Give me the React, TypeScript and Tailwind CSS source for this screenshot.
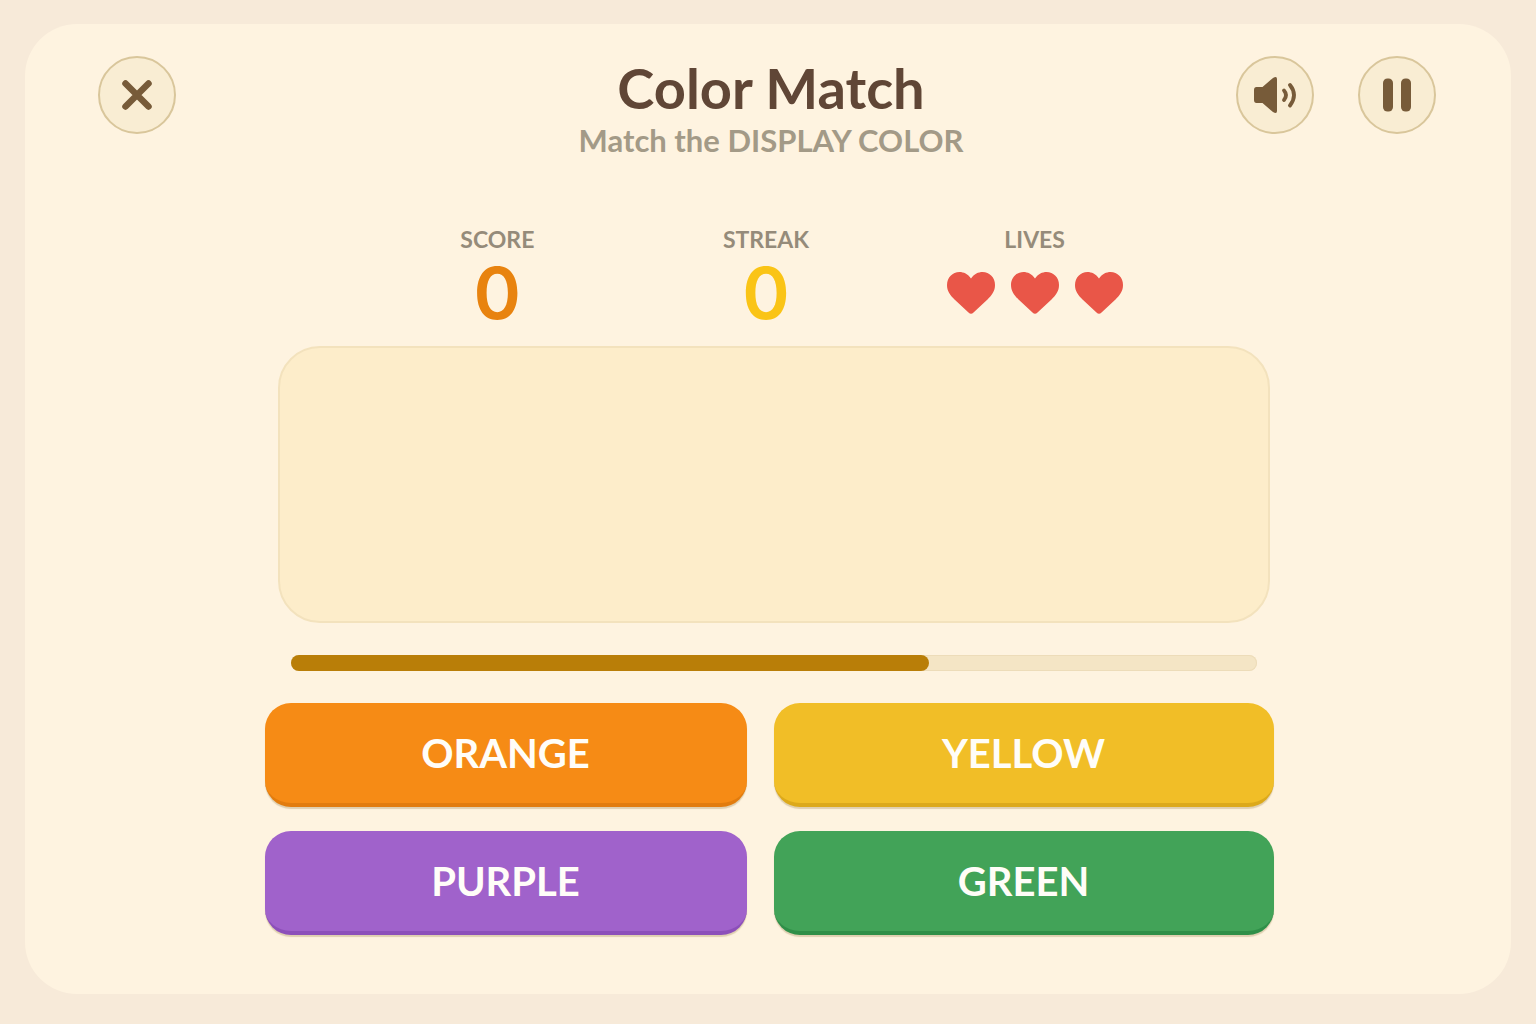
import React, { useState } from 'react';

const colorOptions = [
  { name: 'ORANGE', classes: 'bg-[#f68b15] border-[#e27c0e]' },
  { name: 'YELLOW', classes: 'bg-[#f1be27] border-[#dca91b]' },
  { name: 'PURPLE', classes: 'bg-[#a062cb] border-[#8c4fba]' },
  { name: 'GREEN', classes: 'bg-[#42a358] border-[#2f8f48]' },
];

const CloseIcon = () => (
  <svg className="h-10 w-10" viewBox="0 0 40 40" fill="none" stroke="#775b39" strokeWidth="6.500" strokeLinecap="round" aria-hidden="true">
    <path d="M8.500 8.500 L31.500 31.500 M31.500 8.500 L8.500 31.500" />
  </svg>
);

const SpeakerIcon = () => (
  <svg className="h-11 w-11" viewBox="0 0 44 44" fill="none" aria-hidden="true">
    <path
      d="M3.500 14 H9.500 L20 5 Q24 2.500 24 6 V38 Q24 41.500 20 39 L9.500 30 H3.500 Q1 30 1 27 V17 Q1 14 3.500 14 Z"
      fill="#775b39"
    />
    <path d="M31 17.500 Q35 22 31 27" stroke="#775b39" strokeWidth="3.800" strokeLinecap="round" />
    <path d="M37 12 Q45 22 37 32.500" stroke="#775b39" strokeWidth="3.800" strokeLinecap="round" />
  </svg>
);

const PauseIcon = () => (
  <svg className="h-10 w-10" viewBox="0 0 40 40" fill="#775b39" aria-hidden="true">
    <rect x="6" y="3.500" width="10" height="33" rx="4.500" />
    <rect x="24" y="3.500" width="10" height="33" rx="4.500" />
  </svg>
);

const Heart = () => (
  <svg className="h-[42px] w-12" viewBox="0 0 48 42" fill="#e95648" aria-hidden="true">
    <path d="M24 6.500 C21 2 16.500 0 12.500 0 C5.500 0 0 5.500 0 13 C0 19 3 23 7.500 27.500 L21.500 40.500 Q24 43 26.500 40.500 L40.500 27.500 C45 23 48 19 48 13 C48 5.500 42.500 0 35.500 0 C31.500 0 27 2 24 6.500 Z" />
  </svg>
);

const RoundButton = ({ label, onClick, children }: { label: string; onClick?: () => void; children: React.ReactNode }) => (
  <button
    type="button"
    aria-label={label}
    onClick={onClick}
    className="flex h-[78px] w-[78px] shrink-0 items-center justify-center rounded-full border-2 border-[#d9c69b] bg-[#f9edd3]"
  >
    {children}
  </button>
);

const Stat = ({ label, children }: { label: string; children: React.ReactNode }) => (
  <div className="flex flex-col items-center">
    <span className="text-[23px] leading-8 font-bold text-[#958b7a]">{label}</span>
    <div className="flex h-[76px] items-center gap-4">{children}</div>
  </div>
);

const App = () => {
  const [score, setScore] = useState(0);
  const [streak, setStreak] = useState(0);
  const lives = 3;
  const timeLeft = 66;

  const restart = () => {
    setScore(0);
    setStreak(0);
  };

  return (
    <div className="flex min-h-screen bg-[#f7ead9] px-[25px] pt-6 pb-[30px] font-['Lato',sans-serif]">
      <main className="flex-1 rounded-[52px] bg-[#fef3e0] pt-8 pb-14">
        <header className="grid grid-cols-[1fr_auto_1fr] items-start pr-[75px] pl-[73px]">
          <RoundButton label="Close" onClick={restart}>
            <CloseIcon />
          </RoundButton>
          <div className="pl-2 text-center">
            <h1 className="text-[56px] leading-[64px] font-bold text-[#604636]">Color Match</h1>
            <p className="text-[31px] leading-10 font-bold text-[#a39a87]">Match the DISPLAY COLOR</p>
          </div>
          <div className="flex justify-end gap-11">
            <RoundButton label="Sound">
              <SpeakerIcon />
            </RoundButton>
            <RoundButton label="Pause">
              <PauseIcon />
            </RoundButton>
          </div>
        </header>

        <section className="pt-[63px] pr-1">
          <div className="mx-auto grid max-w-[806px] grid-cols-3">
            <Stat label="SCORE">
              <span className="font-['Inter'] text-7xl font-semibold text-[#e8830f]">{score}</span>
            </Stat>
            <Stat label="STREAK">
              <span className="font-['Inter'] text-7xl font-semibold text-[#fac416]">{streak}</span>
            </Stat>
            <Stat label="LIVES">
              {Array.from({ length: lives }, (_, i) => (
                <Heart key={i} />
              ))}
            </Stat>
          </div>
        </section>

        <div className="pl-3">
          <div className="mx-auto mt-[15px] h-[277px] max-w-[992px] rounded-[42px] border-2 border-[#f3e2bd] bg-[#fdedca]" />
          <div
            role="progressbar"
            aria-label="Time left"
            aria-valuenow={timeLeft}
            className="mx-auto mt-8 h-4 max-w-[966px] rounded-full bg-[#f4e5c5] inset-ring inset-ring-[#eddcb9]"
          >
            <div className="h-full rounded-full bg-[#b97e08]" style={{ width: `${timeLeft}%` }} />
          </div>
        </div>

        <div className="pl-[2px]">
          <div className="mx-auto mt-8 grid max-w-[1009px] grid-cols-[482fr_500fr] gap-x-[27px] gap-y-6">
            {colorOptions.map((option) => (
              <button
                key={option.name}
                type="button"
                className={`h-[104px] rounded-[26px] border-b-4 text-[40px] font-bold text-[#fffdf8] shadow-[0_2px_1px_#dfcfb0] ${option.classes}`}
              >
                {option.name}
              </button>
            ))}
          </div>
        </div>
      </main>
    </div>
  );
};

export default App;
